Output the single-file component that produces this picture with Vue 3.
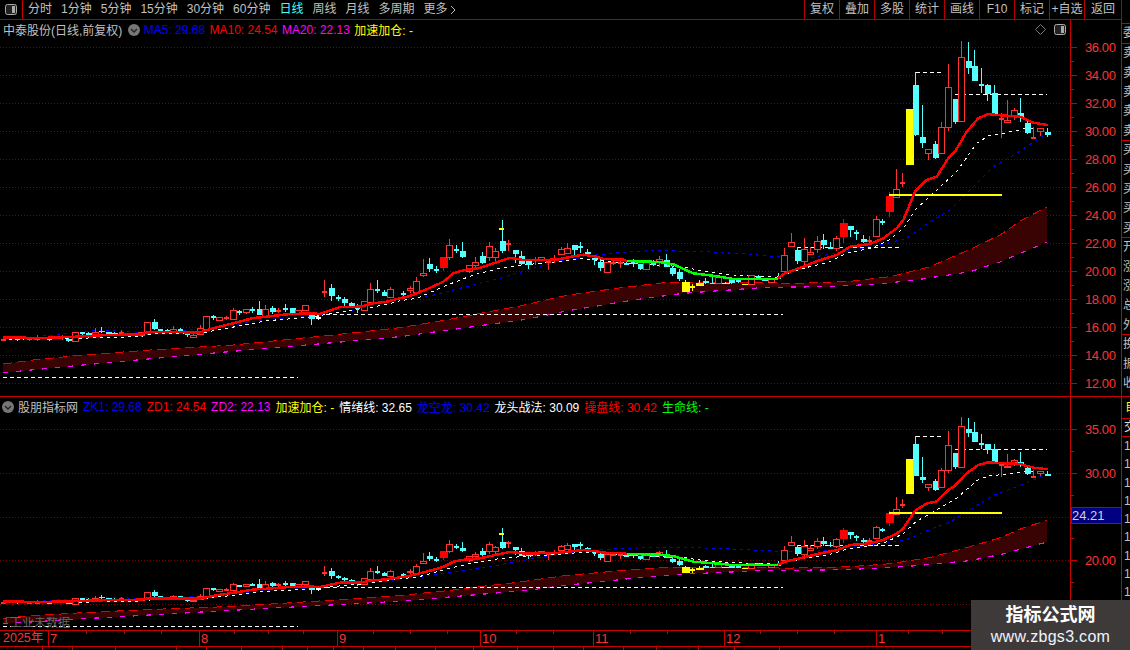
<script setup>
const z = (ox, oy, pts) => pts.map(([x, y]) => [ox + x / 3, oy + y / 3])

const seg8 = [[10,180,180,176,183,'X'],[50,176,176,172,182,'x'],[87,178,178,172,183,'X'],[110,178,178,165,184,'X'],[148,178,178,172,183,'x'],[187,172,172,165,180,'X'],[205,176,182,172,186,'c'],[226,157,185,157,186,'r'],[247,159,159,155,165,'x'],[265,158,165,155,168,'c'],[286,157,165,145,168,'r'],[304,152,157,142,160,'c'],[325,157,163,155,166,'c'],[343,158,163,155,166,'c'],[364,160,160,150,165,'X'],[424,157,167,155,170,'r'],[442,127,157,125,165,'r'],[463,126,147,117,150,'c'],[481,151,151,148,155,'x'],[502,150,155,148,158,'c'],[520,148,156,138,158,'r'],[541,150,150,145,158,'x'],[562,163,163,155,172,'x'],[580,165,173,163,174,'r'],[601,146,163,135,165,'r'],[619,109,147,107,148,'r'],[640,110,110,105,120,'x'],[658,112,122,111,124,'r'],[678,114,114,108,120,'X'],[700,91,117,85,118,'r'],[718,96,96,90,104,'x'],[739,88,98,87,102,'r'],[757,90,90,82,98,'x'],[778,88,105,64,106,'c'],[796,88,108,75,110,'r'],[817,84,96,78,102,'c'],[835,92,92,84,100,'X'],[856,87,87,72,96,'x'],[877,84,99,84,100,'c'],[895,92,100,90,102,'r'],[916,76,92,75,93,'r'],[934,103,116,100,135,'c'],[955,113,113,105,120,'w'],[973,36,36,0,50,'X'],[994,24,48,12,62,'c'],[1015,53,53,45,62,'x'],[1033,57,69,52,80,'c'],[1054,69,79,65,85,'c'],[1072,85,85,72,98,'x'],[1093,63,90,62,92,'r'],[1111,27,67,10,70,'r'],[1132,30,30,0,38,'x'],[1153,35,47,30,48,'c'],[1171,27,52,22,54,'r']]
const seg7 = [[10,252,252,243,260,'x'],[30,235,242,227,250,'r'],[49,214,246,200,250,'r'],[70,190,197,148,200,'r'],[88,162,178,144,185,'c'],[109,180,180,168,190,'x'],[130,141,174,141,182,'R'],[148,105,143,87,150,'r'],[169,121,121,105,128,'x'],[187,123,140,96,143,'c'],[208,166,185,165,190,'r'],[226,156,166,142,170,'r'],[247,138,159,126,162,'c'],[268,109,143,96,152,'r'],[286,123,142,115,153,'r'],[307,94,122,30,130,'c'],[303,57,57,57,57,'Y'],[325,102,102,90,122,'X'],[346,121,132,120,158,'c'],[364,138,161,123,165,'c'],[385,153,165,150,178,'c'],[406,150,150,140,165,'X'],[424,142,150,140,152,'r'],[445,155,155,150,180,'X'],[463,150,150,135,160,'X'],[484,117,134,110,136,'r'],[502,114,131,98,133,'r'],[523,105,120,105,135,'c'],[541,110,110,96,130,'x'],[562,125,133,118,137,'c'],[583,143,150,143,165,'c'],[601,155,174,146,182,'c'],[622,157,188,156,189,'r'],[640,158,158,145,165,'X'],[661,160,160,145,175,'X'],[679,161,161,150,165,'x'],[700,158,158,148,170,'x'],[721,162,176,162,180,'c'],[739,158,179,157,180,'r'],[760,161,161,150,168,'x'],[778,148,158,138,170,'r'],[799,151,170,132,172,'c'],[817,175,191,168,197,'c'],[838,186,207,176,212,'c'],[856,216,246,210,246,'y'],[877,232,232,222,243,'Y'],[898,219,228,210,228,'y'],[916,213,220,205,222,'c'],[937,218,221,195,221,'c'],[955,203,219,202,220,'r'],[976,218,220,216,221,'y'],[994,207,220,205,221,'c'],[1015,214,214,210,220,'x'],[1036,222,224,221,225,'y'],[1054,197,222,196,223,'r'],[1075,200,200,195,210,'x'],[1093,205,212,203,213,'c'],[1114,205,216,204,217,'r'],[1133,205,205,188,208,'x'],[1153,136,185,114,190,'r'],[1174,97,110,68,112,'r'],[1192,120,152,112,160,'c']]
const seg10 = [[43,286,335,265,336,'r'],[64,246,260,220,262,'r'],[82,270,303,262,312,'c'],[103,268,305,235,325,'r'],[121,277,284,260,285,'r'],[142,243,269,228,278,'r'],[160,240,255,222,267,'c'],[181,262,266,246,268,'c'],[199,235,265,227,272,'r'],[220,190,232,178,250,'R'],[241,198,210,198,231,'c'],[259,219,219,210,240,'x'],[280,237,246,225,250,'c'],[298,242,242,228,255,'X'],[319,178,230,168,232,'r'],[337,187,187,178,196,'x']]
const seg3 = [[88,498,545,485,560,'R'],[109,478,502,418,505,'r'],[127,458,458,430,470,'X'],[148,237,405,237,405,'y'],[166,165,316,127,318,'c'],[187,322,339,225,353,'c'],[205,358,371,357,390,'r'],[226,342,385,333,388,'c'],[244,292,371,277,372,'r'],[265,172,292,102,303,'r'],[286,207,275,207,282,'c'],[304,82,275,33,276,'r'],[325,93,113,37,132,'c'],[343,108,152,60,153,'c'],[364,166,166,114,189,'x'],[382,165,193,162,213,'c'],[403,190,252,165,256,'c'],[424,267,267,250,323,'X'],[442,270,278,210,280,'r'],[463,241,255,234,270,'r'],[481,250,262,204,276,'c'],[502,280,309,272,312,'c'],[520,323,323,290,327,'X'],[541,295,304,294,317,'r'],[562,306,316,294,320,'c']]

const conv = (ox, oy, list) => list.map(([x, t, b, wt, wb, k]) => ({ x: Math.round(ox + x / 3), t: oy + t / 3, b: oy + b / 3, wt: oy + wt / 3, wb: oy + wb / 3, k }))
const candles = [
  ...conv(0, 280, seg8), ...conv(400, 210, seg7), ...conv(770, 160, seg10), ...conv(860, 30, seg3)
]

const redPts = [
  ...z(0, 280, [[10,172],[60,172],[100,175],[230,170],[300,166],[420,163],[445,157],[500,156],[560,157],[600,157],[650,142],[700,130],[760,114],[800,110],[860,103],[930,100],[960,102],[1000,88],[1020,81],[1080,80],[1120,70],[1160,65]]),
  ...z(400, 210, [[0,265],[30,258],[80,238],[130,215],[160,190],[190,181],[240,174],[280,160],[330,143],[370,150],[470,149],[510,141],[550,134],[590,140],[610,147],[670,149],[680,153],[780,156],[820,163],[880,190],[960,200],[1000,207],[1130,207]]),
  ...z(770, 160, [[45,340],[100,320],[150,300],[200,285],[240,260],[300,252],[340,235],[380,205],[400,180]]),
  ...z(860, 30, [[165,485],[200,450],[230,440],[265,385],[285,365],[320,305],[355,265],[385,252],[410,255],[480,260],[520,278],[563,285]])
]
const greenPts = z(400, 210, [[680,153],[780,156],[820,163],[880,190],[960,200],[1000,207],[1133,207]])
const whitePts = [
  ...z(0, 280, [[5,178],[230,175],[420,170],[470,160],[600,160],[680,145],[800,122],[930,112],[970,105],[1050,92],[1100,85],[1180,68]]),
  ...z(400, 210, [[0,272],[50,265],[150,222],[220,195],[300,175],[360,166],[470,155],[550,145],[580,150],[680,160],[850,170],[900,182],[1000,195],[1130,202]]),
  ...z(770, 160, [[20,352],[100,325],[180,305],[230,280],[300,265],[350,245],[400,205],[440,145],[490,100]]),
  ...z(860, 30, [[290,425],[350,340],[385,318],[420,312],[500,295],[550,298]])
]
const bluePts = [
  ...z(0, 280, [[130,168],[300,150],[440,158],[600,148],[700,135],[800,118],[930,108],[1000,100],[1100,85],[1180,68]]),
  ...z(400, 210, [[0,272],[80,260],[200,230],[300,205],[400,175],[470,155],[570,137],[650,128],[750,122],[900,124],[1050,133],[1150,142]]),
  ...z(770, 160, [[110,295],[200,280],[260,268],[350,250],[410,235],[480,185],[540,150]]),
  ...z(860, 30, [[320,490],[400,410],[470,370],[560,310]])
]
const bandTop = [
  ...z(0, 280, [[10,252],[100,240],[250,225],[450,210],[700,195],[1000,165],[1200,143]]),
  ...z(400, 210, [[150,328],[250,308],[350,290],[500,256],[650,235],[800,217],[1130,218]]),
  ...z(770, 160, [[30,372],[240,364],[360,350],[480,320],[600,268]]),
  [1000, 235], [1022, 220], [1047, 207]
]
const bandBot = [
  ...z(0, 280, [[10,278],[250,255],[500,232],[800,205],[1000,188],[1200,170]]),
  ...z(400, 210, [[380,328],[500,303],[700,270],[850,250],[1100,232]]),
  ...z(770, 160, [[170,380],[330,372],[450,358],[600,335]]),
  [1000, 262], [1047, 242]
]

const toPts = (arr, f) => arr.map(([x, y]) => `${x.toFixed(1)},${f(y).toFixed(1)}`).join(' ')
const price = (y) => 36 - (y - 47.7) / 14

const makePanel = (f, vbY, vbH, grid, ticks, labels) => ({
  f, viewBox: `0 ${vbY} 1070 ${vbH}`, axisBox: `0 ${vbY} 50 ${vbH}`, grid, ticks, labels,
  red: toPts(redPts, f), green: toPts(greenPts, f), white: toPts(whitePts, f), blue: toPts(bluePts, f),
  top: toPts(bandTop, f), bot: toPts(bandBot, f),
  band: toPts([...bandTop, ...bandBot.slice().reverse()], f),
  candles: candles.map((c) => ({ ...c, t: f(c.t), b: f(c.b), wt: f(c.wt), wb: f(c.wb) })),
  levels: [[3, 298, 377], [298, 783, 314], [797, 902, 247.7], [916, 941, 72], [955, 1047, 94]].map(([a, b, y]) => ({ a, b, y: f(y) })),
  yellow: f(194.7)
})

const identity = (y) => y
const lowerMap = (y) => 429.7 + (35 - price(y)) * 8.73

const topGrid = [36, 34, 32, 30, 28, 26, 24, 22, 20, 18, 16, 14, 12].map((p) => 47.7 + (36 - p) * 14)
const topTicks = [35, 33, 31, 29, 27, 25, 23, 21, 19, 17, 15, 13].map((p) => 47.7 + (36 - p) * 14)
const topLabels = [36, 34, 32, 30, 28, 26, 24, 22, 20, 18, 16, 14, 12].map((p) => ({ y: 47.7 + (36 - p) * 14, text: p.toFixed(2) }))
const lowGrid = [35, 30, 25, 20, 15].map((p) => 429.7 + (35 - p) * 8.73)
const lowTicks = [32.5, 27.5, 22.5, 17.5].map((p) => 429.7 + (35 - p) * 8.73)
const lowLabels = [35, 30, 20].map((p) => ({ y: 429.7 + (35 - p) * 8.73, text: p.toFixed(2) }))

const upper = makePanel(identity, 20, 376, topGrid, topTicks, topLabels)
const lower = makePanel(lowerMap, 397, 233, lowGrid, lowTicks, lowLabels)

const colorOf = (k) => ({ c: '#54ffff', x: '#54ffff', r: '#ff3232', R: '#ff0000', X: '#ff3232', y: '#ffff00', Y: '#ffff00', w: '#ffffff' })[k]
const isCross = (k) => k === 'x' || k === 'X' || k === 'Y' || k === 'w'
const bodyWidth = (k) => (k === 'R' || k === 'y' ? 7 : 5)

const periods = ['分时', '1分钟', '5分钟', '15分钟', '30分钟', '60分钟', '日线', '周线', '月线', '多周期']
const tools = ['复权', '叠加', '多股', '统计', '画线', 'F10', '标记', '+自选', '返回']
const months = [{ x: 48, t: '7' }, { x: 199, t: '8' }, { x: 337, t: '9' }, { x: 480, t: '10' }, { x: 593, t: '11' }, { x: 724, t: '12' }, { x: 876, t: '1' }]
const minor = [86, 124, 161, 234, 268, 303, 373, 410, 447, 516, 553, 630, 667, 760, 797, 834, 908, 942]
const tabs = [43, 30, 43, 61, 30, 35, 41, 25, 26, 30, 32, 40, 38, 44, 36, 30, 40, 33, 42, 36, 45]
const lowRows = Array.from({ length: 9 }, (_, i) => i)
</script>

<template>
  <div class="app">
    <header class="toolbar">
      <div class="logo-box">
        <svg width="12" height="11" viewBox="0 0 12 11"><rect x="0.5" y="0.5" width="11" height="10" rx="2" fill="#222" stroke="#aaa" /><rect x="7" y="2" width="3" height="7" fill="#aaa" /></svg>
      </div>
      <nav class="periods">
        <span v-for="p in periods" :key="p" :class="{ active: p === '日线' }">{{ p }}</span>
        <span class="more">更多
          <svg width="6" height="10" viewBox="0 0 6 10"><path d="M1 1l4 4-4 4" fill="none" stroke="#bbb" /></svg>
        </span>
      </nav>
      <div class="tools">
        <span v-for="t in tools" :key="t">{{ t }}</span>
      </div>
    </header>

    <section class="panel upper">
      <div class="plot">
        <svg class="chart" width="1070" height="376" :viewBox="upper.viewBox">
          <line v-for="y in upper.grid" :key="y" x1="0" x2="1070" :y1="y" :y2="y" class="grid" />
          <polygon :points="upper.band" class="band" />
          <polyline :points="upper.top" class="band-top" />
          <polyline :points="upper.bot" class="band-bot" />
          <line v-for="l in upper.levels" :key="l.a" :x1="l.a" :x2="l.b" :y1="l.y" :y2="l.y" class="level" />
          <polyline :points="upper.blue" class="ma-blue" />
          <polyline :points="upper.white" class="ma-white" />
          <g v-for="(c, i) in upper.candles" :key="i">
            <line :x1="c.x + 0.5" :x2="c.x + 0.5" :y1="c.wt" :y2="c.wb" :stroke="colorOf(c.k)" />
            <line v-if="isCross(c.k)" :x1="c.x - 2" :x2="c.x + 3" :y1="c.t" :y2="c.t" :stroke="colorOf(c.k)" stroke-width="2" />
            <rect v-else-if="c.k === 'r'" :x="c.x - 2.5" :y="c.t" width="6" :height="Math.max(c.b - c.t, 1)" fill="#000" :stroke="colorOf(c.k)" />
            <rect v-else :x="c.x - Math.floor(bodyWidth(c.k) / 2)" :y="c.t" :width="bodyWidth(c.k) + 1" :height="Math.max(c.b - c.t, 1)" :fill="colorOf(c.k)" />
          </g>
          <line x1="889" x2="1002" :y1="upper.yellow" :y2="upper.yellow" class="yellow-line" />
          <polyline :points="upper.red" class="ma-red" />
          <polyline :points="upper.green" class="ma-green" />
        </svg>
        <div class="legend">
          <span class="c-grey">中泰股份(日线,前复权)</span>
          <svg class="chev" width="12" height="12" viewBox="0 0 12 12"><circle cx="6" cy="6" r="6" fill="#777" /><path d="M3 5l3 3 3-3" fill="none" stroke="#222" stroke-width="1.4" /></svg>
          <span class="c-blue">MA5: 29.68</span>
          <span class="c-red">MA10: 24.54</span>
          <span class="c-mag">MA20: 22.13</span>
          <span class="c-yel">加速加仓: -</span>
        </div>
        <div class="corner">
          <svg width="11" height="11" viewBox="0 0 11 11"><path d="M5.5 0.5l5 5-5 5-5-5z" fill="none" stroke="#777" /></svg>
          <svg width="12" height="11" viewBox="0 0 12 11"><rect x="0.5" y="0.5" width="11" height="10" rx="2" fill="#222" stroke="#aaa" /><rect x="7" y="2" width="3" height="7" fill="#aaa" /></svg>
        </div>
      </div>
      <div class="axis">
        <svg class="chart" width="50" height="376" :viewBox="upper.axisBox">
          <line v-for="y in upper.grid" :key="y" x1="0" x2="6" :y1="y" :y2="y" class="tick" />
          <line v-for="y in upper.ticks" :key="y" x1="0" x2="3" :y1="y" :y2="y" class="tick" />
          <text v-for="l in upper.labels" :key="l.text" x="44.5" :y="l.y + 4.5" class="price">{{ l.text }}</text>
        </svg>
      </div>
      <div class="strip">
        <div class="s-row s-empty"></div>
        <div class="s-row s-box">委比</div>
        <div class="s-row s-block">卖<br />卖<br />卖<br />卖<br />卖</div>
        <div class="s-row s-block">买<br />买<br />买<br />买<br />买</div>
        <div class="s-row s-block">开<br />涨<br />涨<br />总<br />外</div>
        <div class="s-row s-block">换<br />振<br />收</div>
      </div>
    </section>

    <section class="panel lower">
      <div class="plot">
        <svg class="chart" width="1070" height="233" :viewBox="lower.viewBox">
          <line v-for="y in lower.grid" :key="y" x1="0" x2="1070" :y1="y" :y2="y" class="grid" />
          <polygon :points="lower.band" class="band" />
          <polyline :points="lower.top" class="band-top" />
          <polyline :points="lower.bot" class="band-bot" />
          <line v-for="l in lower.levels" :key="l.a" :x1="l.a" :x2="l.b" :y1="l.y" :y2="l.y" class="level" />
          <polyline :points="lower.blue" class="ma-blue" />
          <polyline :points="lower.white" class="ma-white" />
          <g v-for="(c, i) in lower.candles" :key="i">
            <line :x1="c.x + 0.5" :x2="c.x + 0.5" :y1="c.wt" :y2="c.wb" :stroke="colorOf(c.k)" />
            <line v-if="isCross(c.k)" :x1="c.x - 2" :x2="c.x + 3" :y1="c.t" :y2="c.t" :stroke="colorOf(c.k)" stroke-width="2" />
            <rect v-else-if="c.k === 'r'" :x="c.x - 2.5" :y="c.t" width="6" :height="Math.max(c.b - c.t, 1)" fill="#000" :stroke="colorOf(c.k)" />
            <rect v-else :x="c.x - Math.floor(bodyWidth(c.k) / 2)" :y="c.t" :width="bodyWidth(c.k) + 1" :height="Math.max(c.b - c.t, 1)" :fill="colorOf(c.k)" />
          </g>
          <line x1="889" x2="1002" :y1="lower.yellow" :y2="lower.yellow" class="yellow-line" />
          <polyline :points="lower.red" class="ma-red" />
          <polyline :points="lower.green" class="ma-green" />
        </svg>
        <div class="legend legend-low">
          <svg class="chev-l" width="12" height="12" viewBox="0 0 12 12"><circle cx="6" cy="6" r="6" fill="#777" /><path d="M3 5l3 3 3-3" fill="none" stroke="#222" stroke-width="1.4" /></svg>
          <span class="c-grey">股朋指标网</span>
          <span class="c-blue">ZK1: 29.68</span>
          <span class="c-red">ZD1: 24.54</span>
          <span class="c-mag">ZD2: 22.13</span>
          <span class="c-yel">加速加仓: -</span>
          <span class="c-white">情绪线: 32.65</span>
          <span class="c-blue">龙空龙: 30.42</span>
          <span class="c-white">龙头战法: 30.09</span>
          <span class="c-red">操盘线: 30.42</span>
          <span class="c-green">生命线: -</span>
        </div>
        <div class="foot-note">「工业未数据</div>
      </div>
      <div class="axis">
        <svg class="chart" width="50" height="233" :viewBox="lower.axisBox">
          <line v-for="y in lower.grid" :key="y" x1="0" x2="6" :y1="y" :y2="y" class="tick" />
          <line v-for="y in lower.ticks" :key="y" x1="0" x2="3" :y1="y" :y2="y" class="tick" />
          <text v-for="l in lower.labels" :key="l.text" x="44.5" :y="l.y + 4.5" class="price">{{ l.text }}</text>
          <rect x="0" y="507.5" width="50" height="16" fill="#000080" stroke="#c00000" />
          <text x="1" y="520" class="cursor-price">24.21</text>
        </svg>
      </div>
      <div class="strip">
        <div class="s-row s-self">自选</div>
        <div class="s-row s-trade">交易</div>
        <div class="s-rows">
          <span v-for="i in lowRows" :key="i">1</span>
        </div>
      </div>
    </section>

    <footer class="timeline">
      <span class="year">2025年</span>
      <template v-for="m in months" :key="m.x">
        <i class="m-line" :style="{ left: m.x + 'px' }"></i>
        <b class="m-text" :style="{ left: m.x + 2 + 'px' }">{{ m.t }}</b>
      </template>
      <i v-for="x in minor" :key="x" class="m-tick" :style="{ left: x + 'px' }"></i>
    </footer>
    <div class="tabs">
      <span v-for="(w, i) in tabs" :key="i" :style="{ width: w + 'px' }"></span>
    </div>

    <aside class="mark">
      <strong>指标公式网</strong>
      <em>www.zbgs3.com</em>
    </aside>
  </div>
</template>

<style>
html, body { margin: 0; background: #000; }
</style>

<style scoped>
.app {
  position: relative;
  width: 1130px;
  height: 650px;
  overflow: hidden;
  background: #000;
  display: flex;
  flex-direction: column;
  font: 12px "Liberation Sans", "Noto Sans CJK SC", sans-serif;
  color: #c0c0c0;
}
.toolbar {
  width: 1122px;
  height: 20px;
  flex: none;
  box-sizing: border-box;
  display: flex;
  align-items: stretch;
  border-bottom: 1px solid #b40000;
  border-right: 1px solid #b40000;
  line-height: 19px;
}
.logo-box {
  width: 23px;
  box-sizing: border-box;
  border-right: 1px solid #c80000;
  display: flex;
  align-items: center;
  justify-content: center;
}
.logo-box svg { margin-left: -1px; }
.periods {
  display: flex;
  gap: 9px;
  padding-left: 5px;
  white-space: nowrap;
}
.periods .active { color: #40ffff; }
.more { display: inline-flex; align-items: center; gap: 2px; }
.tools {
  margin-left: auto;
  display: flex;
}
.tools span {
  width: 35px;
  box-sizing: border-box;
  border-left: 1px solid #b40000;
  text-align: center;
  white-space: nowrap;
}
.tools span:last-child { width: 37px; }
.panel {
  display: flex;
  flex: none;
  box-sizing: border-box;
}
.panel.upper { height: 376px; }
.panel.lower { height: 234px; border-top: 1px solid #c80000; }
.plot {
  position: relative;
  width: 1071px;
  box-sizing: border-box;
  border-right: 1px solid #c80000;
  flex: none;
}
.chart {
  display: block;
  shape-rendering: crispEdges;
}
.grid { stroke: #800000; stroke-dasharray: 1 2; }
.band { fill: #3a0303; }
.band-top { fill: none; stroke: #e80000; stroke-width: 1; stroke-dasharray: 9 5; }
.band-bot { fill: none; stroke: #ff00ff; stroke-width: 1.2; stroke-dasharray: 5 8; }
.level { stroke: #fff; stroke-width: 1; stroke-dasharray: 4 3; }
.ma-blue { fill: none; stroke: #0000ff; stroke-width: 1; stroke-dasharray: 3 4; }
.ma-white { fill: none; stroke: #fff; stroke-width: 1; stroke-dasharray: 3 4; }
.ma-red { fill: none; stroke: #ff0000; stroke-width: 2.5; }
.ma-green { fill: none; stroke: #00ff00; stroke-width: 2.5; }
.yellow-line { stroke: #ffff00; stroke-width: 2; }
.legend {
  position: absolute;
  left: 3px;
  top: 1px;
  display: flex;
  align-items: center;
  height: 17px;
  white-space: nowrap;
}
.legend > span { margin-right: 4.4px; }
.chev { margin: 0 4px 0 1px; }
.legend-low { left: 2px; top: 1px; }
.legend-low > span { margin-right: 5px; }
.chev-l { margin-right: 4px; }
.c-grey { color: #c0c0c0; }
.c-blue { color: #0000ff; }
.c-red { color: #ff0000; }
.c-mag { color: #ff00ff; }
.c-yel { color: #ffff00; }
.c-white { color: #ffffff; }
.c-green { color: #00ff00; }
.corner {
  position: absolute;
  right: 4px;
  top: 4px;
  display: flex;
  gap: 8px;
}
.foot-note {
  position: absolute;
  left: -2px;
  bottom: 0;
  height: 13px;
  line-height: 13px;
  color: #666;
  overflow: hidden;
}
.axis {
  width: 51px;
  box-sizing: border-box;
  border-right: 1px solid #c80000;
  flex: none;
}
.tick { stroke: #c80000; }
.price {
  fill: #ff3232;
  font-size: 13px;
  text-anchor: end;
  letter-spacing: -0.4px;
}
.cursor-price { fill: #d0d0d0; font-size: 13px; }
.strip {
  width: 8px;
  overflow: hidden;
  flex: none;
  display: flex;
  flex-direction: column;
  white-space: nowrap;
}
.s-row { box-sizing: border-box; padding-left: 1px; }
.s-empty { height: 5px; }
.s-box { height: 20px; border-top: 1px solid #c80000; line-height: 19px; }
.s-block { height: 97px; border-top: 1px solid #c80000; line-height: 19.4px; }
.s-self { height: 21px; color: #ffff00; padding-left: 3px; line-height: 20px; }
.s-trade { height: 19px; border-top: 1px solid #c80000; border-bottom: 1px solid #c80000; padding-left: 2px; line-height: 17px; color: #ddd; }
.s-rows { display: flex; flex-direction: column; padding-left: 2px; }
.s-rows span { height: 18.3px; line-height: 18.3px; }
.timeline {
  position: relative;
  height: 17px;
  flex: none;
  box-sizing: border-box;
  border-top: 1px solid #c80000;
  border-bottom: 1px solid #c80000;
  color: #ff3232;
  line-height: 15px;
  font-size: 13px;
}
.year { position: absolute; left: 3px; top: 0; font-size: 12.5px; }
.m-line { position: absolute; top: 0; bottom: 0; width: 1px; background: #c80000; }
.m-text { position: absolute; top: 0; font-weight: 400; }
.m-tick { position: absolute; top: 0; height: 3px; width: 1px; background: #c80000; }
.tabs { display: flex; height: 3px; flex: none; }
.tabs span { box-sizing: border-box; border-right: 1px solid #c80000; flex: none; }
.mark {
  position: absolute;
  right: 0;
  bottom: 0;
  width: 159px;
  height: 50px;
  background: #3f3a3a;
  display: flex;
  flex-direction: column;
  align-items: center;
  color: #fff;
}
.mark strong { font-size: 18px; line-height: 24px; margin-top: 3px; }
.mark em { font-style: normal; font-size: 16px; line-height: 20px; letter-spacing: 0.3px; color: #eef4ff; }
</style>
